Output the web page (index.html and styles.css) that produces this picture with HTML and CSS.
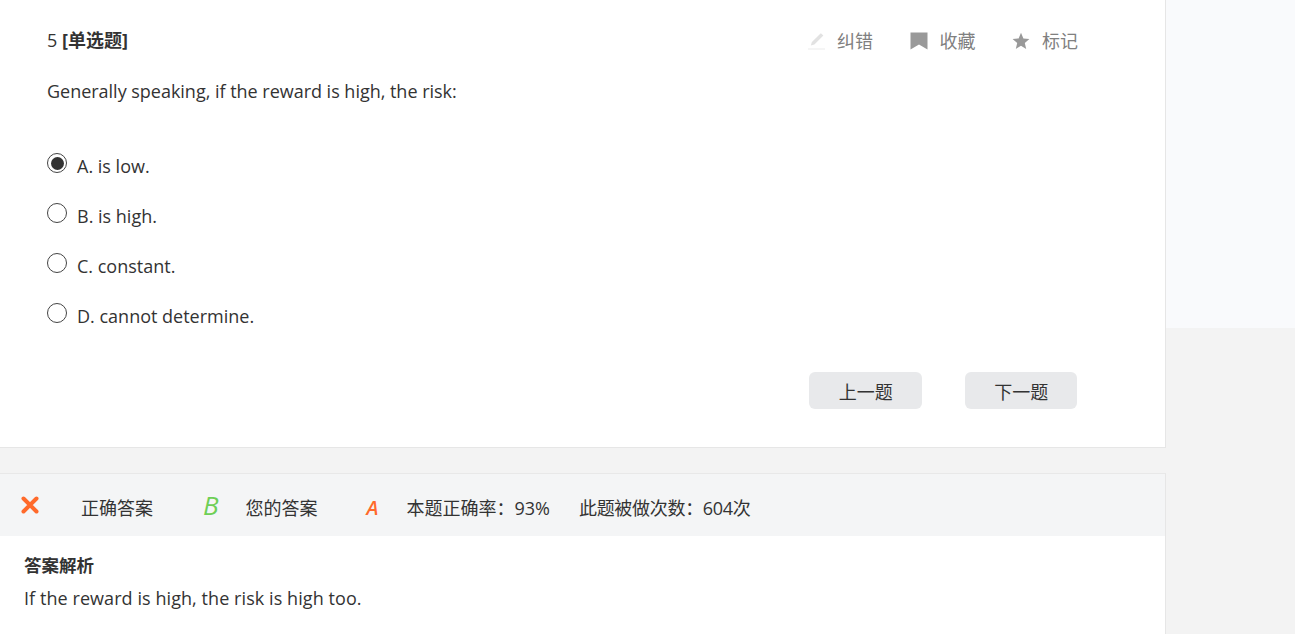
FILE: index.html

```html
<!DOCTYPE html>
<html>
<head>
    <meta charset="UTF-8">
    <title>单选题</title>
    <link rel="stylesheet" href="styles.css">
</head>
<body>
<div class="page">
    <div class="main-column">
        <!-- Question card -->
        <div class="question-card">
            <div class="question-top">
                <div class="question-type">5 <b>[单选题]</b></div>
                <div class="question-tools">
                    <span class="tool tool-fix">
                        <svg width="18" height="18" viewBox="0 0 18 18"><path d="M12.8 1.2l2.6 2.4-9 8.8-3.6 1.2 1.1-3.6z" fill="#e2e2e2"/><rect x="0" y="16.5" width="17" height="1" fill="#ececec"/></svg>
                        纠错
                    </span>
                    <span class="tool tool-save">
                        <svg width="18" height="18" viewBox="0 0 18 18"><path d="M0.5 0.5h17v17l-8.5-5-8.5 5z" fill="#999"/></svg>
                        收藏
                    </span>
                    <span class="tool tool-mark">
                        <svg width="18" height="18" viewBox="0 0 18 18"><path d="M9 0.8l2.4 5.6 6 .5-4.6 4 1.4 6-5.2-3.2-5.2 3.2 1.4-6-4.6-4 6-.5z" fill="#999"/></svg>
                        标记
                    </span>
                </div>
            </div>
            <p class="question-text">Generally speaking, if the reward is high, the risk:</p>
            <ul class="option-list">
                <li class="option"><span class="radio radio-checked"></span>A. is low.</li>
                <li class="option"><span class="radio"></span>B. is high.</li>
                <li class="option"><span class="radio"></span>C. constant.</li>
                <li class="option"><span class="radio"></span>D. cannot determine.</li>
            </ul>
            <div class="question-nav">
                <button class="nav-button" type="button">上一题</button>
                <button class="nav-button" type="button">下一题</button>
            </div>
        </div>

        <!-- Result -->
        <div class="result-card">
            <div class="result-bar">
                <svg class="result-icon" width="18" height="18" viewBox="0 0 18 18"><path d="M2.5 2.5l13 13M15.5 2.5l-13 13" stroke="#ff6a2b" stroke-width="4" stroke-linecap="round"/></svg>
                <span class="result-label">正确答案</span>
                <span class="result-right">B</span>
                <span class="result-label">您的答案</span>
                <span class="result-wrong">A</span>
                <span class="result-label">本题正确率：93%</span>
                <span class="result-label result-count">此题被做次数：604次</span>
            </div>
            <div class="analysis">
                <h3 class="analysis-title">答案解析</h3>
                <p class="analysis-text">If the reward is high, the risk is high too.</p>
            </div>
        </div>
    </div>
    <div class="side-column">
        <div class="side-panel"></div>
    </div>
</div>
</body>
</html>
```

FILE: styles.css

```css
/* Body styling */
html, body {
    height: 100%;
}

body {
    margin: 0;
    overflow: hidden;
    background-color: #f3f3f3;
    color: #333;
    font-family: "Open Sans", "Noto Sans CJK SC", sans-serif;
    font-size: 18px;
}

.page {
    display: flex;
    height: 634px;
    overflow: hidden;
}

.main-column {
    width: 1166px;
    flex: none;
}

.side-column {
    flex: 1;
}

.side-panel {
    height: 328px;
    background-color: #f9fafc;
}

/* Question card */
.question-card {
    box-sizing: border-box;
    height: 448px;
    padding: 28px 88px 0 47px;
    background-color: #fff;
    border-right: 1px solid #e6e6e6;
    border-bottom: 1px solid #e6e6e6;
}

.question-top {
    display: flex;
    justify-content: space-between;
    align-items: flex-start;
    height: 26px;
}

.question-type {
    line-height: 24px;
}

.question-type b {
    font-weight: 700;
}

.question-tools {
    display: flex;
    gap: 36.5px;
    margin-right: -1px;
    color: #808080;
    font-size: 18px;
    line-height: 26px;
}

.tool {
    display: flex;
    align-items: center;
    gap: 12px;
}

.tool-fix {
    gap: 11px;
}

.question-text {
    margin: 24px 0 0;
    line-height: 26px;
    letter-spacing: -0.02px;
}

/* Options */
.option-list {
    list-style: none;
    margin: 37px 0 0;
    padding: 0;
}

.option {
    display: flex;
    align-items: center;
    height: 50px;
}

.radio {
    box-sizing: border-box;
    width: 20px;
    height: 20px;
    margin: -6px 10px 0 0;
    border: 1px solid #444;
    border-radius: 50%;
    background-color: #fff;
}

.radio-checked {
    border-width: 1.5px;
    padding: 2.5px;
    background-color: #333;
    background-clip: content-box;
}

/* Prev and next */
.question-nav {
    display: flex;
    justify-content: flex-end;
    gap: 43px;
    margin-top: 31px;
}

.nav-button {
    width: 112.5px;
    height: 37px;
    padding: 0 0 0 1px;
    border: none;
    border-radius: 6px;
    background-color: #e8e9eb;
    color: #333;
    font-family: inherit;
    font-size: 18px;
}

/* Result card */
.result-card {
    box-sizing: border-box;
    height: 186px;
    margin-top: 25px;
    background-color: #fff;
    border-top: 1px solid #e8e8e8;
    border-right: 1px solid #e6e6e6;
}

.result-bar {
    box-sizing: border-box;
    display: flex;
    align-items: center;
    height: 62px;
    padding: 4px 0 0 21px;
    background-color: #f4f5f6;
}

.result-icon {
    margin: -4px 42px 0 0;
}

.result-right {
    margin: -5px 0 0 50px;
    color: #6ecf55;
    font-size: 26px;
    font-style: italic;
    font-weight: 500;
}

.result-right + .result-label {
    margin-left: 27px;
}

.result-wrong {
    margin-left: 49px;
    color: #ff6a2b;
    font-size: 20px;
    font-style: italic;
    font-weight: 600;
}

.result-wrong + .result-label {
    margin-left: 28px;
}

.result-count {
    margin-left: 29px;
    letter-spacing: -0.3px;
}

/* Answer analysis */
.analysis {
    padding: 16px 24px 0;
}

.analysis-title {
    margin: 0;
    font-size: 17.5px;
    font-weight: 700;
    line-height: 26px;
}

.analysis-text {
    margin: 7px 0 0;
    line-height: 26px;
    letter-spacing: 0.07px;
}
```
